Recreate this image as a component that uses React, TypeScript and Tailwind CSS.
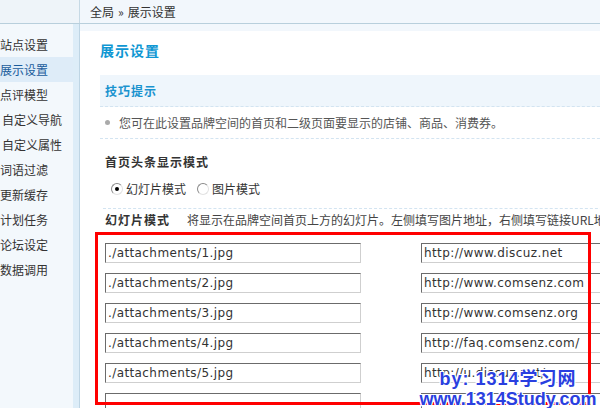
const menu = [
  { label: "站点设置" },
  { label: "展示设置", active: true },
  { label: "点评模型" },
  { label: "自定义导航", indent: true },
  { label: "自定义属性", indent: true },
  { label: "词语过滤" },
  { label: "更新缓存" },
  { label: "计划任务" },
  { label: "论坛设定" },
  { label: "数据调用" },
];

const slides = [
  { img: "./attachments/1.jpg", url: "http://www.discuz.net" },
  { img: "./attachments/2.jpg", url: "http://www.comsenz.com" },
  { img: "./attachments/3.jpg", url: "http://www.comsenz.org" },
  { img: "./attachments/4.jpg", url: "http://faq.comsenz.com/" },
  { img: "./attachments/5.jpg", url: "http://u.discuz.net/" },
  { img: "", url: "" },
];

function Radio({ checked }: { checked?: boolean }) {
  return (
    <span className="w-[12px] h-[12px] rounded-full bg-white border border-t-[#8a8a8a] border-l-[#8a8a8a] border-r-[#e2e2e2] border-b-[#e2e2e2] flex items-center justify-center">
      {checked && <span className="w-[4px] h-[4px] rounded-full bg-black" />}
    </span>
  );
}

function Field({ value, width }: { value: string; width: string }) {
  return (
    <div
      className={`${width} h-[20px] shrink-0 bg-white border border-t-[#6b6b6b] border-l-[#6b6b6b] border-r-[#cfcfcf] border-b-[#cfcfcf] pl-[2px] flex items-center text-[12px] tracking-[0.4px] text-[#333] font-['DejaVu_Sans',sans-serif] whitespace-nowrap overflow-hidden`}
    >
      {value}
    </div>
  );
}

export default function App() {
  return (
    <div className="relative w-[600px] h-[408px] overflow-hidden bg-white text-[12px] text-[#333] font-['Noto_Sans_CJK_SC',sans-serif]">
      {/* Top bar */}
      <div className="flex h-[24px] border-b border-[#b8cfdc]">
        <div className="w-[80px] bg-[#eef4f9] border-r border-[#c6d9e5]" />
        <div className="flex-1 bg-[#f2f7fc] pl-[10px] flex items-center">
          <span>全局</span>
          <span className="mx-[4px]">»</span>
          <span>展示设置</span>
        </div>
      </div>

      <div className="flex h-[384px]">
        {/* Sidebar */}
        <div className="flex w-[80px] shrink-0 border-r border-[#bed5e4]">
          <div className="w-[73px] bg-[#f3f8fc] pt-[8px]">
            {menu.map((m) => (
              <div
                key={m.label}
                className={`h-[25px] flex items-center whitespace-nowrap ${m.indent ? "pl-[2px]" : ""} ${
                  m.active ? "bg-[#deecf8] text-[#1a5c9c]" : ""
                }`}
              >
                {m.label}
              </div>
            ))}
          </div>
          <div className="w-[6px] bg-[#ddedf8]" />
        </div>

        {/* Main */}
        <div className="flex-1 min-w-0">
          <div className="h-[7px] bg-[#f2f7fc]" />
          <div className="pl-[20px]">
            <h1 className="mt-[9px] h-[20px] leading-[20px] text-[14px] font-bold tracking-[1px] text-[#0f97d3]">
              展示设置
            </h1>

            {/* Tips */}
            <div className="mt-[15px] w-[520px]">
              <div className="h-[32px] pl-[5px] flex items-center bg-[#eff6fc] border-b border-dashed border-[#d3e4f1] font-bold tracking-[1px] text-[#1a93cf]">
                技巧提示
              </div>
              <div className="h-[32px] flex items-center border-b border-dashed border-[#d3e4f1] text-[#555] whitespace-nowrap">
                <span className="ml-[5px] mr-[9px] w-[5px] h-[5px] rounded-full bg-[#aaa]" />
                您可在此设置品牌空间的首页和二级页面要显示的店铺、商品、消费券。
              </div>
            </div>

            <div className="mt-[13px] pl-[5px] h-[20px] leading-[20px] font-bold tracking-[1px]">
              首页头条显示模式
            </div>

            <div className="mt-[7px] h-[20px] flex items-center pl-[11px]">
              <Radio checked />
              <span className="ml-[3px]">幻灯片模式</span>
              <span className="ml-[11px]">
                <Radio />
              </span>
              <span className="ml-[3px]">图片模式</span>
            </div>

            <div className="mt-[9px] ml-[3px] w-[520px] border-t border-dashed border-[#d3e4f1]" />

            <div className="mt-[1px] pl-[5px] h-[20px] flex items-center whitespace-nowrap">
              <span className="font-bold tracking-[1px]">幻灯片模式</span>
              <span className="ml-[17px] text-[#444]">
                将显示在品牌空间首页上方的幻灯片。左侧填写图片地址，右侧填写链接URL地址
              </span>
            </div>

            {/* Slide fields */}
            <div className="mt-[13px] ml-[5px] flex flex-col gap-[10px]">
              {slides.map((s, i) => (
                <div key={i} className="flex gap-[60px]">
                  <Field value={s.img} width="w-[256px]" />
                  <Field value={s.url} width="w-[200px]" />
                </div>
              ))}
            </div>
          </div>
        </div>
      </div>

      {/* Red annotation box */}
      <div className="absolute left-[95px] top-[232px] w-[496px] h-[173px] border-[3px] border-[#ff0000]" />

      {/* Watermark */}
      <div className="absolute left-[420px] top-[367px] w-[176px] flex flex-col items-center font-['Liberation_Sans',sans-serif] font-bold text-[#2a3fe0] leading-[20px] [text-shadow:1px_1px_0_#fff,-1px_-1px_0_#fff,1px_-1px_0_#fff,-1px_1px_0_#fff,0_2px_0_#fff]">
        <div className="text-[18px] tracking-[1px] whitespace-nowrap">
          by: 1314<span className="font-['Noto_Sans_CJK_SC',sans-serif]">学习网</span>
        </div>
        <div className="text-[18px] whitespace-nowrap">www.1314Study.com</div>
      </div>
    </div>
  );
}
